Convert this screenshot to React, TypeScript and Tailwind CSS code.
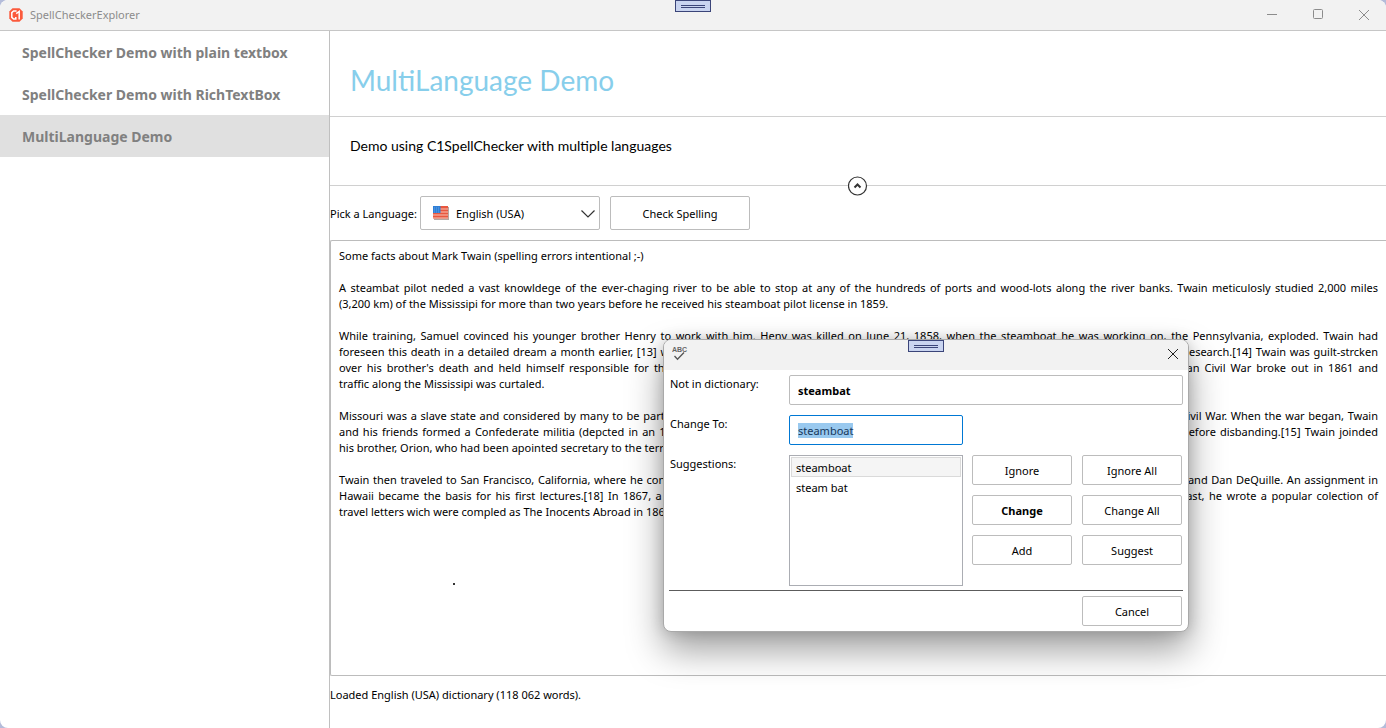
import { useEffect, useRef } from "react";
import type { ReactNode } from "react";

const demos = [
  "SpellChecker Demo with plain textbox",
  "SpellChecker Demo with RichTextBox",
  "MultiLanguage Demo",
];

const article = `Some facts about Mark Twain (spelling errors intentional ;-)

A steambat pilot neded a vast knowldege of the ever-chaging river to be able to stop at any of the hundreds of ports and wood-lots along the river banks. Twain meticulosly studied 2,000 miles (3,200\u00a0km) of the Mississipi for more than two years before he received his steamboat pilot license in 1859.

While training, Samuel covinced his younger brother Henry to work with him. Heny was killed on June 21, 1858, when the steamboat he was working on, the Pennsylvania, exploded. Twain had foreseen\u00a0this death in a detailed dream a month earlier, [13] which inspired his interest in parapsychology; he was an early member of the Society for Psychical Research.[14] Twain was guilt-strcken over\u00a0his\u00a0brother's death and held himself responsible for the rest of his life. He continued to work on the river and served as a river pilot until the American Civil War broke out in 1861 and traffic\u00a0along\u00a0the\u00a0Mississipi was curtaled.

Missouri was a slave state and considered by many to be part of the South, and was represented in both the Confederate and Federal governments during the Civil War. When the war began, Twain and\u00a0his\u00a0friends formed a Confederate militia (depcted in an 1885 short story, "The Private History of a Campaign That Failed"), and drilled for only two weeks before disbanding.[15] Twain joinded his\u00a0brother, Orion, who had been apointed secretary to the territorial governor of Nevada, and headed west.

Twain then traveled to San Francisco, California, where he continued as a journalist and began lecturing. He met other writers such as Bret Harte, Artemus Ward and Dan DeQuille. An assignment in Hawaii became the basis for his first lectures.[18] In 1867, a local newspaper funded a trip to the Mediterranean. During his tour of Europe and the Middle East, he wrote a popular colection of travel\u00a0letters wich were compled as The Inocents Abroad in 1869.`;

function AppLogo() {
  return (
    <svg viewBox="0 0 16 16" className="size-4" aria-hidden="true">
      <path d="M4.5 1.2h7l3.2 3.2v7.2l-3.2 3.2h-7l-3.2-3.2V4.4z" fill="#fb5a3c" />
      <path d="M8.6 4H5.6L3.8 5.6v4.8L5.6 12h2.2v-2" fill="none" stroke="#fff" strokeWidth="1.5" />
      <path d="M8.2 6.6l3-2.2v8" fill="none" stroke="#fff" strokeWidth="1.5" />
    </svg>
  );
}

function CloseIcon() {
  return (
    <svg viewBox="0 0 12 12" className="size-3" fill="none" stroke="currentColor" aria-hidden="true">
      <path d="M1 1l10 10M11 1L1 11" />
    </svg>
  );
}

function SpellIcon() {
  return (
    <svg viewBox="0 0 16 16" className="size-4" aria-hidden="true">
      <text x="0" y="6.2" fontSize="7" fontWeight="700" fontFamily="Liberation Sans, sans-serif" fill="#666">
        ABC
      </text>
      <path d="M2.5 10l3 3.3L12 6.5" fill="none" stroke="#555" strokeWidth="1.3" />
    </svg>
  );
}

function FlagIcon() {
  return (
    <svg viewBox="0 0 16 14" className="h-3.5 w-4" aria-hidden="true">
      <rect x="1" y="1" width="15" height="13" fill="#b5a7a2" />
      <rect width="15" height="12.6" fill="#e8573f" />
      <path d="M0 3h15M0 6h15M0 9h15M0 12h15" stroke="#f7c3b4" strokeWidth="1.2" />
      <rect width="7.5" height="7" fill="#2f7fd6" />
      <path d="M1 2h6M1 4h6M1 6h6" stroke="#79b4ee" strokeWidth=".7" strokeDasharray="1 1" />
    </svg>
  );
}

function Grip() {
  return (
    <div className="absolute top-0 left-1/2 flex h-3 w-9 -translate-x-1/2 flex-col justify-center gap-px border border-[#3b4579] bg-[#c9d4f0] px-[5px]">
      <span className="h-px bg-[#3b4579]" />
      <span className="h-px bg-[#3b4579]" />
    </div>
  );
}

function PushButton({ children, bold = false }: { children: ReactNode; bold?: boolean }) {
  return (
    <button
      type="button"
      className={`h-[30px] w-[100px] rounded-xs border border-[#bcbcbc] bg-white pt-0.5 ${bold ? "font-bold" : ""}`}
    >
      {children}
    </button>
  );
}

function SpellDialog() {
  const change = useRef<HTMLInputElement>(null);
  useEffect(() => {
    change.current?.focus({ preventScroll: true });
    change.current?.select();
  }, []);

  return (
    <section
      role="dialog"
      aria-label="Spelling"
      className="absolute top-[339px] left-[663px] w-[526px] overflow-hidden rounded-lg border border-[#a9a9a9] bg-white shadow-[0_18px_36px_rgba(0,0,0,0.38),0_0_14px_rgba(0,0,0,0.16)]"
    >
      <header className="flex h-[30px] items-center justify-between bg-[#f2f2f2] pr-[9px] pb-0.5 pl-2">
        <SpellIcon />
        <Grip />
        <button type="button" aria-label="Close" className="text-[#222]">
          <CloseIcon />
        </button>
      </header>
      <div className="flex flex-col gap-2.5 pt-[5px] pr-[5px] pl-1.5">
        <div className="flex">
          <label htmlFor="unknown" className="w-[119px] shrink-0 pt-px">
            Not in dictionary:
          </label>
          <input
            id="unknown"
            readOnly
            value="steambat"
            className="h-[30px] min-w-0 flex-1 rounded-xs border border-[#bcbcbc] px-2 font-bold outline-none"
          />
        </div>
        <div className="flex">
          <label htmlFor="change" className="w-[119px] shrink-0 pt-px">
            Change To:
          </label>
          <input
            id="change"
            ref={change}
            defaultValue="steamboat"
            className="h-[30px] w-[174px] rounded-xs border border-[#0078d4] px-2 outline-none selection:bg-[#99c9ef] selection:text-[#17375a]"
          />
        </div>
        <div className="flex">
          <span id="suggestions" className="w-[119px] shrink-0 pt-px">
            Suggestions:
          </span>
          <ul
            role="listbox"
            aria-labelledby="suggestions"
            className="h-[131px] w-[174px] border border-[#abadb3] p-px"
          >
            <li role="option" aria-selected="true" className="h-5 border border-[#dadada] bg-[#f5f5f5] px-1 pt-0.5">
              steamboat
            </li>
            <li role="option" aria-selected="false" className="h-5 border border-transparent px-1 pt-0.5">
              steam bat
            </li>
          </ul>
          <div className="ml-auto grid grid-cols-2 content-start gap-2.5 pr-px">
            <PushButton>Ignore</PushButton>
            <PushButton>Ignore All</PushButton>
            <PushButton bold>Change</PushButton>
            <PushButton>Change All</PushButton>
            <PushButton>Add</PushButton>
            <PushButton>Suggest</PushButton>
          </div>
        </div>
      </div>
      <footer className="mx-[5px] mt-1 flex justify-end border-t border-[#5c5c5c] py-[5px] pr-px">
        <PushButton>Cancel</PushButton>
      </footer>
    </section>
  );
}

export default function App() {
  return (
    <div className="h-screen bg-[#b4bcda] font-['Noto_Sans',sans-serif] text-[11px] leading-4 text-black">
      <div className="relative flex h-full flex-col overflow-hidden rounded-lg bg-white">
        <header className="relative flex h-[31px] shrink-0 items-center border-b border-[#c6c6c6] bg-[#f2f2f2] pr-4 pl-2 text-[#8c8c8c]">
          <AppLogo />
          <span className="ml-1.5">SpellCheckerExplorer</span>
          <Grip />
          <div className="ml-auto flex items-center gap-[34px]">
            <button type="button" aria-label="Minimize">
              <svg viewBox="0 0 12 12" className="size-3" fill="none" stroke="currentColor" aria-hidden="true">
                <path d="M1 5.5h10" />
              </svg>
            </button>
            <button type="button" aria-label="Maximize">
              <svg viewBox="0 0 12 12" className="size-3" fill="none" stroke="currentColor" aria-hidden="true">
                <rect x="1.5" y=".5" width="9" height="9" rx="1" />
              </svg>
            </button>
            <button type="button" aria-label="Close window">
              <CloseIcon />
            </button>
          </div>
        </header>

        <div className="flex min-h-0 flex-1">
          <nav className="w-[330px] shrink-0 border-r border-[#c0c0c0] text-sm font-bold text-[#808080]">
            {demos.map((name, i) => (
              <a
                key={name}
                href="#"
                aria-current={i === 2 ? "page" : undefined}
                className={`flex h-[42px] items-center px-[22px] pt-0.5 ${i === 2 ? "bg-[#e0e0e0]" : ""}`}
              >
                {name}
              </a>
            ))}
          </nav>

          <main className="flex min-w-0 flex-1 flex-col">
            <h1 className="flex h-[86px] shrink-0 items-center border-b border-[#d0d0d0] px-5 pt-3 font-[Lato,sans-serif] text-[28px] leading-8 text-[#87ceeb]">
              MultiLanguage Demo
            </h1>
            <div className="relative flex h-[69px] shrink-0 items-center border-b border-[#d0d0d0] px-5 pb-2.5 font-[Lato,sans-serif] text-sm">
              Demo using C1SpellChecker with multiple languages
              <button
                type="button"
                aria-label="Collapse description"
                className="absolute -bottom-[11px] left-1/2 -translate-x-1/2 bg-transparent"
              >
                <svg viewBox="0 0 20 20" className="size-5" fill="#fff" stroke="#333" aria-hidden="true">
                  <circle cx="9.5" cy="10" r="9" strokeWidth="1.2" />
                  <path d="M6.5 11.5l3-3 3 3" fill="none" strokeWidth="2" />
                </svg>
              </button>
            </div>

            <div className="flex shrink-0 items-center py-2.5">
              <label htmlFor="language" className="w-[90px] pt-px">
                Pick a Language:
              </label>
              <div className="relative">
                <select
                  id="language"
                  className="h-[34px] w-[180px] appearance-none rounded-xs border border-[#bcbcbc] bg-white pt-0.5 pr-8 pl-[35px]"
                >
                  <option>English (USA)</option>
                </select>
                <span className="pointer-events-none absolute inset-y-0 left-[13px] flex items-center">
                  <FlagIcon />
                </span>
                <span className="pointer-events-none absolute inset-y-0 right-1 flex items-center">
                  <svg viewBox="0 0 16 16" className="size-4" fill="none" stroke="#333" strokeWidth="1.2" aria-hidden="true">
                    <path d="M1.5 5.5L8 12l6.5-6.5" />
                  </svg>
                </span>
              </div>
              <button type="button" className="ml-2.5 h-[34px] w-[140px] rounded-xs border border-[#bcbcbc] bg-white pt-0.5">
                Check Spelling
              </button>
            </div>

            <textarea
              aria-label="Document"
              spellCheck={false}
              defaultValue={article}
              className="min-h-0 w-full flex-1 resize-none rounded-l-xs border-y border-l border-[#bcbcbc] py-[7px] pr-2 pl-2 text-justify outline-none"
            />
            <p className="h-[52px] shrink-0 pt-[11px]">Loaded English (USA) dictionary (118 062 words).</p>
          </main>
        </div>

        <span className="absolute top-[583px] left-[453px] size-0.5 bg-[#333]" />
        <SpellDialog />
      </div>
    </div>
  );
}
